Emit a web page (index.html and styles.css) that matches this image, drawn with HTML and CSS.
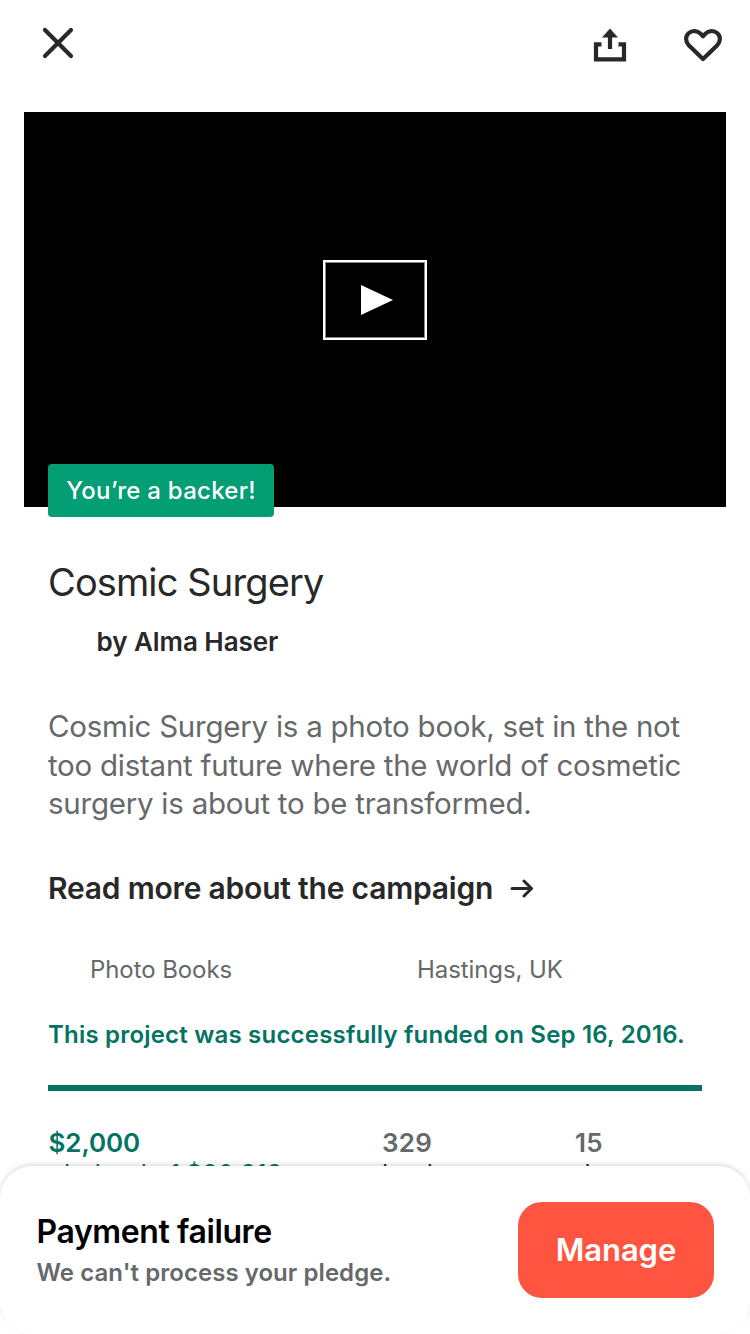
FILE: index.html
```html
<!DOCTYPE html>
<html lang="en">
<head>
<meta charset="utf-8">
<title>Cosmic Surgery</title>
<link rel="stylesheet" href="styles.css">
</head>
<body>
<div class="screen">
  <header class="toolbar">
    <svg class="icon-close" width="32" height="32" viewBox="0 0 32 32"><path d="M3 3L29 29M29 3L3 29"/></svg>
    <div class="actions">
      <svg class="icon-share" width="34" height="34" viewBox="0 0 34 34"><path class="line" d="M8.500 16.300H3V31.300H31V16.300H25.500M17 21V7"/><path class="fill" d="M17 .5L25 9.500H9Z"/></svg>
      <svg class="icon-heart" width="40" height="34" viewBox="0 0 40 34"><path d="M20 31L6 17.500C2.200 13.500 2.200 8.300 5.600 5.200C9.200 2 14.600 2.500 17.500 5.600L20 8.300L22.500 5.600C25.400 2.500 30.800 2 34.400 5.200C37.800 8.300 37.800 13.500 34 17.500Z"/></svg>
    </div>
  </header>
  <section class="video">
    <div class="play"><svg width="32" height="32" viewBox="0 0 32 32"><path d="M0 1V31L32 16Z"/></svg></div>
    <div class="badge">You’re a backer!</div>
  </section>
  <main class="content">
    <h1 class="title">Cosmic Surgery</h1>
    <p class="creator">by Alma Haser</p>
    <p class="blurb">Cosmic Surgery is a photo book, set in the not<br>too distant future where the world of cosmetic<br>surgery is about to be transformed.</p>
    <a class="more"><span>Read more about the campaign</span><svg width="24" height="20" viewBox="0 0 24 20"><path d="M2 10.500H21M14 3L21.500 10.500L14 18"/></svg></a>
    <div class="facts"><span>Photo Books</span><span>Hastings, UK</span></div>
    <p class="funded">This project was successfully funded on Sep 16, 2016.</p>
    <div class="bar"></div>
    <div class="stats">
      <div class="stat pledged"><b>$2,000</b><span>pledged of $20,919</span></div>
      <div class="stat"><b>329</b><span>backers</span></div>
      <div class="stat"><b>15</b><span>days</span></div>
    </div>
  </main>
  <footer class="sheet">
    <div class="message"><strong>Payment failure</strong><span>We can't process your pledge.</span></div>
    <button class="manage">Manage</button>
  </footer>
</div>
</body>
</html>
```
FILE: styles.css
```css
* { box-sizing: border-box; margin: 0; padding: 0; }
body { background: #fff; color: #282828; font-family: Inter, "Liberation Sans", sans-serif; }
.screen { position: relative; width: 750px; height: 1334px; overflow: hidden; white-space: nowrap; }
svg { display: block; }
.toolbar { display: flex; justify-content: space-between; height: 112px; padding: 27px 27px 0 42px; }
.icon-close path { fill: none; stroke: #282828; stroke-width: 4.200; stroke-linecap: round; }
.actions { display: flex; gap: 56px; padding-top: 1px; }
.icon-share .line { fill: none; stroke: #282828; stroke-width: 4.200; }
.icon-share .fill { fill: #282828; }
.icon-heart path { fill: none; stroke: #282828; stroke-width: 4.200; stroke-linejoin: round; }
.video { position: relative; display: flex; align-items: center; justify-content: center; height: 395px; margin: 0 24px; background: #000; }
.play { display: flex; align-items: center; width: 104px; height: 80px; margin-top: -19px; padding-left: 36px; border: 2px solid #fff; box-shadow: inset 0 0 0 1px #888; }
.play path { fill: #fff; }
.badge { position: absolute; left: 24px; top: 352px; display: flex; align-items: center; justify-content: center; width: 226px; height: 53px; border-radius: 4px; background: #039e74; color: #fff; font-size: 24px; font-weight: 500; letter-spacing: .25px; }
.content { padding: 51px 48px 0; }
.title { font-size: 38px; font-weight: 400; line-height: 48px; letter-spacing: -.88px; }
.creator { margin-top: 20px; padding-left: 48.500px; font-size: 26px; font-weight: 600; line-height: 32px; letter-spacing: -.05px; }
.blurb { margin-top: 49px; color: #656969; font-size: 29.500px; line-height: 38.500px; letter-spacing: -.25px; }
.more { display: flex; align-items: center; gap: 17px; margin-top: 47.500px; font-size: 30px; font-weight: 600; line-height: 36px; letter-spacing: -.2px; }
.more path { fill: none; stroke: #282828; stroke-width: 3; stroke-linecap: round; stroke-linejoin: round; }
.facts { display: grid; grid-template-columns: 327px 327px; margin-top: 49px; padding-left: 42px; color: #656969; font-size: 24px; line-height: 30px; letter-spacing: -.08px; }
.funded { margin-top: 35px; color: #037362; font-size: 24px; font-weight: 600; line-height: 30px; letter-spacing: .2px; }
.bar { height: 6px; margin-top: 35px; background: #037362; }
.stats { display: grid; grid-template-columns: 333px 193px 1fr; margin-top: 35.500px; padding-left: 1px; color: #656969; }
.stat b { display: block; font-size: 26px; font-weight: 600; line-height: 32px; letter-spacing: .3px; }
.stat span { display: block; color: #282828; font-size: 25.500px; line-height: 30px; letter-spacing: 0; }
.pledged { margin-left: -.5px; }
.pledged b { letter-spacing: -.1px; }
.pledged b, .pledged span { color: #037362; }
.sheet { position: absolute; left: 0; right: 0; bottom: 0; display: flex; align-items: center; justify-content: space-between; height: 168px; padding: 0 36px; border-radius: 32px; background: #fff; box-shadow: 0 -2px 4px rgba(0,0,0,.13); }
.message { display: flex; flex-direction: column; padding-top: 5px; }
.message strong { padding-left: .5px; color: #000; font-size: 32px; font-weight: 600; line-height: 40px; letter-spacing: -.4px; }
.message span { padding-left: .5px; color: #656969; font-size: 24px; font-weight: 600; line-height: 41px; letter-spacing: .05px; }
.manage { width: 196px; height: 96px; padding-bottom: 2px; border: 0; border-radius: 24px; background: #ff5440; color: #fff; font: 600 31px Inter, sans-serif; letter-spacing: -.1px; }
```
